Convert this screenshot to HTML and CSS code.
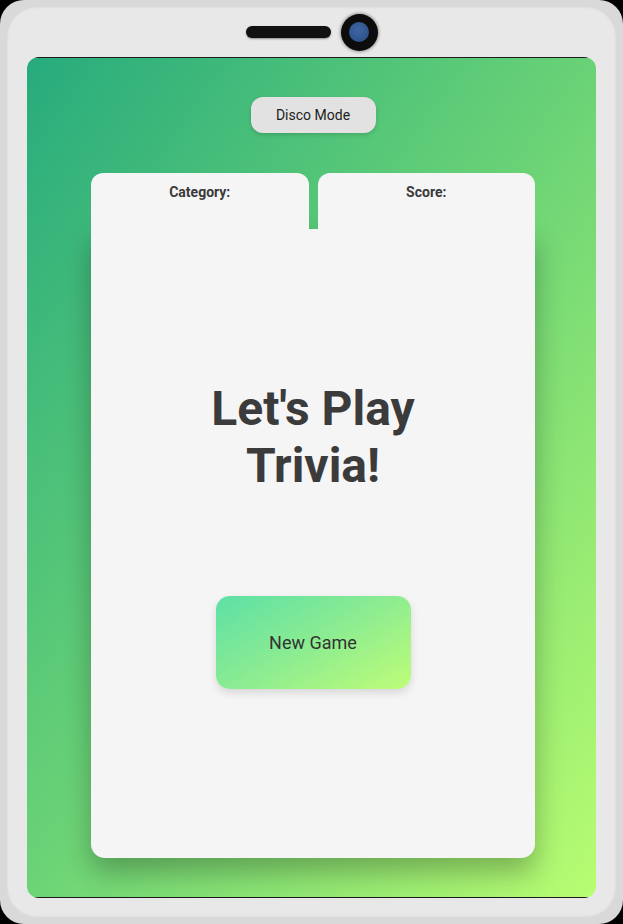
FILE: index.html
```html
<!DOCTYPE html>
<html lang="en">
<head>
<meta charset="utf-8">
<title>Trivia</title>
<link rel="stylesheet" href="styles.css">
</head>
<body>
<div class="phone">
  <div class="bezel">
    <div class="top">
      <div class="speaker"></div>
      <div class="camera"><div class="lens"></div></div>
    </div>
    <div class="screen">
      <button class="disco">Disco Mode</button>
      <div class="game">
        <div class="tabs">
          <div class="tab">Category:</div>
          <div class="tab">Score:</div>
        </div>
        <div class="card">
          <h1 class="title">Let's Play<br>Trivia!</h1>
          <button class="new-game">New Game</button>
        </div>
      </div>
    </div>
  </div>
</div>
</body>
</html>
```

FILE: styles.css
```css
* { box-sizing: border-box; }
html, body { margin: 0; padding: 0; background: #000; }
body { font-family: Roboto, "Liberation Sans", sans-serif; }

.phone {
  width: 623px;
  height: 924px;
  background: #d9d9d9;
  border-radius: 24px;
  padding: 7px;
}
.bezel {
  height: 100%;
  background: #e8e8e8;
  border-radius: 30px;
  padding: 0 20px 19px;
  display: flex;
  flex-direction: column;
  box-shadow: inset 0 0 3px rgba(0,0,0,0.08);
}
.top {
  height: 50px;
  display: flex;
  align-items: center;
  justify-content: center;
  gap: 10px;
}
.speaker {
  width: 85px;
  height: 12px;
  border-radius: 6px;
  background: #111;
  box-shadow: 0 1px 2px rgba(0,0,0,0.4);
}
.camera {
  width: 37px;
  height: 37px;
  border-radius: 50%;
  background: #0c0c0c;
  display: flex;
  align-items: center;
  justify-content: center;
  box-shadow: 0 0 3px 1px rgba(0,0,0,0.35);
}
.lens {
  width: 20px;
  height: 20px;
  border-radius: 50%;
  background: radial-gradient(circle at 45% 40%, #3d65a3, #2a4d80);
}
.screen {
  flex: 1;
  border-radius: 12px;
  background:
    linear-gradient(#1c1c1c, #1c1c1c) top center / calc(100% - 16px) 1px no-repeat,
    linear-gradient(#1c1c1c, #1c1c1c) bottom center / calc(100% - 16px) 1px no-repeat,
    linear-gradient(125deg, #27ab7d 0%, #6bd376 50%, #b8fd71 100%);
  display: flex;
  flex-direction: column;
  align-items: center;
  padding-top: 40px;
  padding-left: 3px;
}
.disco {
  width: 125px;
  height: 36px;
  border: none;
  border-radius: 12px;
  background: #e2e2e2;
  color: #1c1c1c;
  font-family: Roboto, "Liberation Sans", sans-serif;
  font-size: 14px;
  box-shadow: 0 2px 4px rgba(0,0,0,0.15);
  margin-bottom: 40px;
}
.game {
  width: 444px;
  display: flex;
  flex-direction: column;
}
.tabs {
  position: relative;
  z-index: 1;
  display: grid;
  grid-template-columns: 1fr 1fr;
  gap: 9px;
  height: 56px;
}
.tab {
  background: #f5f5f5;
  border-radius: 12px 12px 0 0;
  text-align: center;
  font-weight: 700;
  font-size: 14px;
  color: #3a3a3a;
  padding-top: 11px;
}
.card {
  height: 629px;
  background: #f5f5f5;
  border-radius: 0 0 14px 14px;
  box-shadow: 0 14px 28px rgba(0,0,0,0.28);
  display: flex;
  flex-direction: column;
  align-items: center;
  padding-top: 151px;
}
.title {
  margin: 0 0 102px;
  font-size: 48px;
  line-height: 57px;
  font-weight: 700;
  color: #3b3b3b;
  text-align: center;
}
.new-game {
  width: 195px;
  height: 93px;
  border: none;
  border-radius: 14px;
  background: linear-gradient(150deg, #5de0a6 0%, #8cec91 50%, #befd78 100%);
  color: #333;
  font-family: Roboto, "Liberation Sans", sans-serif;
  font-size: 18px;
  box-shadow: 0 4px 8px rgba(0,0,0,0.12);
}
```
